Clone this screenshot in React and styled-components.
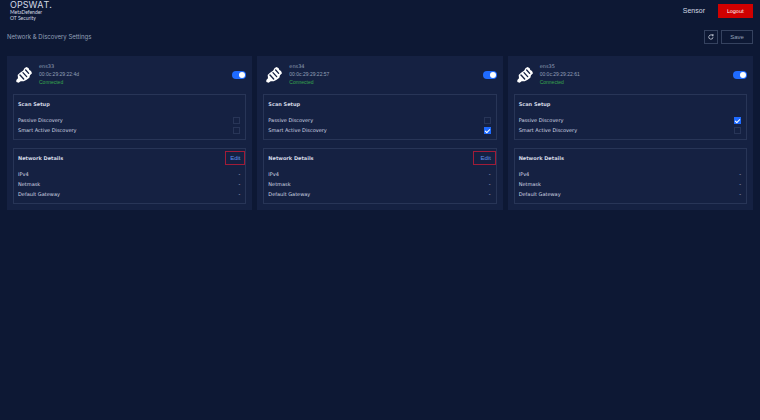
import React, { useState } from "react"
import styled, { createGlobalStyle, ThemeProvider } from "styled-components"

const theme = {
  colors: {
    page: "#0d1834",
    card: "#152142",
    border: "#283557",
    outline: "#35425f",
    text: "#d3d8e4",
    muted: "#94a0b8",
    link: "#5f92ea",
    primary: "#1f6bff",
    success: "#37a64d",
    danger: "#d00000",
    mark: "#a01c38",
  },
  fonts: {
    body: `"DejaVu Sans", Verdana, sans-serif`,
    title: `Inter, "Liberation Sans", sans-serif`,
    label: `"Liberation Sans", Arial, sans-serif`,
    brand: `Lato, "Liberation Sans", sans-serif`,
  },
}

const interfaces = [
  { name: "ens33", mac: "00:0c:29:29:22:4d", passive: false, active: false, edit: "narrow" },
  { name: "ens34", mac: "00:0c:29:29:22:57", passive: false, active: true, edit: "wide" },
  { name: "ens35", mac: "00:0c:29:29:22:61", passive: true, active: false },
]

const details = ["IPv4", "Netmask", "Default Gateway"]

const PlugIcon = () => (
  <svg width="16" height="16" viewBox="0 0 48 48" fill="none" aria-hidden="true">
    <path
      d="M5 24 L12 17 L21 11 L26 3 L32 0 L38 4 L40 9 L45 12 L48 19 L42 25 L40 32 L32 38 L23 43 L14 43 L8 47 L1 45 L1 39 L6 34 Z"
      fill="#fff"
    />
    <g stroke={theme.colors.card} strokeWidth="4" strokeLinecap="round">
      <path d="M12 24 L23 36" />
      <path d="M21 17 L32 29" />
      <path d="M29 9 L38 19" />
    </g>
  </svg>
)

const RefreshIcon = () => (
  <svg width="6" height="6" viewBox="0 0 24 24" fill="none" aria-hidden="true">
    <path d="M20 13 A8.5 8.5 0 1 1 15 4.5" stroke="currentColor" strokeWidth="3" />
    <path d="M13 1 L23 2 L20 11 Z" fill="currentColor" />
  </svg>
)

const InterfaceCard = ({ name, mac, passive, active, edit }) => {
  const [enabled, setEnabled] = useState(true)
  const [scan, setScan] = useState({ passive, active })

  return (
    <Card>
      <CardHeader>
        <PlugIcon />
        <Identity>
          <InterfaceName>{name}</InterfaceName>
          <Small>{mac}</Small>
          <Small $connected>Connected</Small>
        </Identity>
        <Switch
          type="checkbox"
          role="switch"
          aria-label={`Enable ${name}`}
          checked={enabled}
          onChange={e => setEnabled(e.target.checked)}
        />
      </CardHeader>

      <Panel>
        <PanelHeader>
          <PanelTitle>Scan Setup</PanelTitle>
        </PanelHeader>
        <Option>
          Passive Discovery
          <Checkbox
            type="checkbox"
            checked={scan.passive}
            onChange={e => setScan({ ...scan, passive: e.target.checked })}
          />
        </Option>
        <Option>
          Smart Active Discovery
          <Checkbox
            type="checkbox"
            checked={scan.active}
            onChange={e => setScan({ ...scan, active: e.target.checked })}
          />
        </Option>
      </Panel>

      <Panel>
        <PanelHeader>
          <PanelTitle>Network Details</PanelTitle>
          {edit && <EditButton $wide={edit === "wide"}>Edit</EditButton>}
        </PanelHeader>
        <Details>
          {details.map(label => (
            <Detail key={label}>
              <dt>{label}</dt>
              <dd>-</dd>
            </Detail>
          ))}
        </Details>
      </Panel>
    </Card>
  )
}

const App = () => (
  <ThemeProvider theme={theme}>
    <GlobalStyle />
    <Header>
      <Brand>
        <Logo>OPSWAT.</Logo>
        <Product>MetaDefender</Product>
        <Product>OT Security</Product>
      </Brand>
      <Account>
        <Sensor>Sensor</Sensor>
        <LogoutButton>Logout</LogoutButton>
      </Account>
    </Header>
    <main>
      <Toolbar>
        <Title>Network &amp; Discovery Settings</Title>
        <Actions>
          <IconButton aria-label="Refresh">
            <RefreshIcon />
          </IconButton>
          <SaveButton>Save</SaveButton>
        </Actions>
      </Toolbar>
      <Cards>
        {interfaces.map(o => (
          <InterfaceCard key={o.name} {...o} />
        ))}
      </Cards>
    </main>
  </ThemeProvider>
)

export default App

const GlobalStyle = createGlobalStyle`
  * {
    box-sizing: border-box;
  }
  body {
    margin: 0;
    background: ${theme.colors.page};
    color: ${theme.colors.text};
    font-family: ${theme.fonts.body};
    font-size: 5px;
    line-height: 10px;
  }
  h1, h2, h3, p, dl, dd {
    margin: 0;
  }
`

const Header = styled.header`
  display: flex;
  align-items: flex-start;
  justify-content: space-between;
  height: 22px;
  padding: 0 7px 0 10px;
`

const Brand = styled.div`
  font-family: ${p => p.theme.fonts.brand};
`

const Logo = styled.div`
  font-family: ${p => p.theme.fonts.title};
  font-size: 9px;
  font-kerning: none;
  line-height: 9px;
`

const Product = styled.div`
  font-size: 5px;
  line-height: 6px;
`

const Account = styled.div`
  display: flex;
  align-items: center;
  gap: 13px;
  height: 22px;
`

const Sensor = styled.span`
  font-family: ${p => p.theme.fonts.label};
  font-size: 7px;
`

const Button = styled.button`
  display: flex;
  align-items: center;
  justify-content: center;
  height: 14px;
  padding: 0;
  border: 1px solid ${p => p.theme.colors.outline};
  background: transparent;
  color: ${p => p.theme.colors.muted};
  font-family: ${p => p.theme.fonts.label};
  font-size: 6px;
  cursor: pointer;
`

const LogoutButton = styled(Button)`
  width: 35px;
  border: 0;
  background: ${p => p.theme.colors.danger};
  color: #fff;
  font-family: ${p => p.theme.fonts.body};
  font-size: 5px;
`

const IconButton = styled(Button)`
  width: 14px;
  color: ${p => p.theme.colors.text};
`

const SaveButton = styled(Button)`
  width: 32px;
`

const Toolbar = styled.div`
  display: flex;
  align-items: center;
  justify-content: space-between;
  padding: 8px 7px 12px;
`

const Title = styled.h1`
  color: ${p => p.theme.colors.muted};
  font-family: ${p => p.theme.fonts.title};
  font-size: 6px;
  font-weight: 400;
`

const Actions = styled.div`
  display: flex;
  gap: 3px;
`

const Cards = styled.div`
  display: grid;
  grid-template-columns: repeat(3, 1fr);
  gap: 5px;
  padding: 0 7px;
`

const Card = styled.section`
  display: flex;
  flex-direction: column;
  gap: 8px;
  padding: 7px 6px 6px;
  background: ${p => p.theme.colors.card};
`

const CardHeader = styled.div`
  display: flex;
  align-items: center;
  gap: 7px;
  padding-left: 3px;
`

const Identity = styled.div`
  flex: 1;
`

const InterfaceName = styled.h2`
  color: ${p => p.theme.colors.muted};
  font-size: 5px;
  font-weight: 400;
  line-height: 7px;
`

const Small = styled.p`
  color: ${p => (p.$connected ? p.theme.colors.success : p.theme.colors.muted)};
  font-family: ${p => p.theme.fonts.label};
  line-height: 8px;
`

const Switch = styled.input`
  appearance: none;
  display: flex;
  justify-content: flex-end;
  width: 14px;
  height: 8px;
  margin: 0;
  padding: 1px;
  border-radius: 4px;
  background: ${p => p.theme.colors.primary};
  cursor: pointer;

  &:before {
    content: "";
    width: 6px;
    height: 6px;
    border-radius: 50%;
    background: #fff;
  }
  &:not(:checked) {
    justify-content: flex-start;
    background: ${p => p.theme.colors.outline};
  }
`

const Panel = styled.section`
  padding: 2px 0 4px;
  border: 1px solid ${p => p.theme.colors.border};
`

const PanelHeader = styled.div`
  display: flex;
  align-items: center;
  justify-content: space-between;
  height: 14px;
  margin-bottom: 4px;
  padding-left: 4px;
`

const PanelTitle = styled.h3`
  font-size: 5px;
  font-weight: 700;
`

const Option = styled.label`
  display: flex;
  align-items: center;
  justify-content: space-between;
  padding: 0 5px 0 4px;
`

const Checkbox = styled.input`
  appearance: none;
  width: 7px;
  height: 7px;
  margin: 0;
  border: 1px solid ${p => p.theme.colors.border};

  &:checked {
    display: flex;
    align-items: center;
    justify-content: center;
    border-color: ${p => p.theme.colors.primary};
    background: ${p => p.theme.colors.primary};
  }
  &:checked:before {
    content: "";
    width: 4px;
    height: 2px;
    border: solid #fff;
    border-width: 0 0 1px 1px;
    transform: rotate(-45deg);
  }
`

const EditButton = styled(Button)`
  width: ${p => (p.$wide ? "23px" : "20px")};
  padding-left: ${p => (p.$wide ? "3px" : "0")};
  border-color: ${p => p.theme.colors.mark};
  color: ${p => p.theme.colors.link};
`

const Details = styled.dl`
  padding: 0 5px 0 4px;
`

const Detail = styled.div`
  display: flex;
  justify-content: space-between;
`
